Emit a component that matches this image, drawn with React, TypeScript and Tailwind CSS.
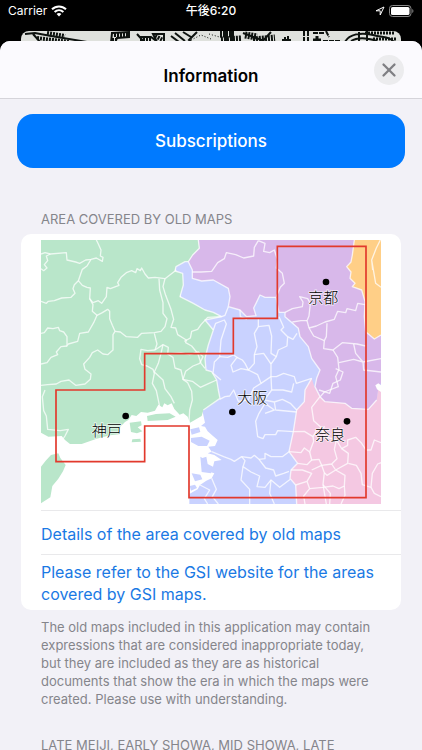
import {X} from "lucide-react";

const districts = [
    // west
    "M0 42 L12 38 L28 42 L76 38 L78 60 L104 66 L116 70 L134 60 L150 58 L166 54 L184 64 L186 52 L178 48 L180 30 L172 12 L166 0",
    "M28 42 L16 48 L20 62 L10 74 L18 84 L8 92 L0 86",
    "M150 58 L138 78 L124 88 L112 122 L100 134 L96 146 L102 160 L90 172 L62 174 L40 182 L22 184 L16 190 L0 184",
    "M112 122 L124 136 L138 142 L148 144 L146 176 L156 188 L172 182 L182 190 L196 170 L198 142 L208 146 L224 140 L234 136 L230 128 L240 112 L256 98 L272 92 L284 98 L288 86 L298 92 L302 84 L312 102 L322 114 L342 112 L372 116 L402 93",
    "M146 176 L156 194 L154 214 L168 226 L184 218 L200 208 L206 214 L206 236 L214 256 L222 274",
    "M168 226 L158 248 L142 276 L116 280 L110 304 L82 312 L78 318 L78 290 L68 276 L56 272 L52 262 L36 266 L20 264 L10 278 L0 280",
    "M78 318 L60 320 L46 336 L50 344 L30 352 L18 368 L0 372",
    "M222 274 L216 284 L216 330 L200 344 L186 342 L170 330 L154 338 L146 352 L128 372 L132 388 L150 402 L148 418 L132 432 L104 436 L84 420 L60 424 L46 432 L20 434 L0 436",
    "M222 274 L238 276 L256 290 L290 292 L302 280 L340 278 L360 274 L372 260 L378 236 L366 220 L366 188 L356 150 L354 116",
    "M342 330 L320 332 L300 328 L296 356 L302 374 L318 378 L336 388 L340 400 L334 430 L346 452 L356 500",
    "M12 450 L4 470 L8 512 L16 528 L20 568 L58 572 L82 568 L72 588 L64 600",
    "M372 116 L366 140 L374 166 L390 208 L398 238 L390 262 L404 264 L410 284 L436 300 L434 308 L452 318 L470 340 L480 370 L492 385",
    "M542 230 L500 232 L480 254 L470 268 L452 274 L448 294 L430 304",
    "M342 330 L348 312 L340 280",
    "M342 330 L366 314 L382 322 L380 342 L396 352 L402 384 L420 390 L426 418 L440 428 L452 454 L454 480 L446 510 L444 546",
    "M366 314 L360 340 L352 370 L340 396 L366 420 L372 446 L390 470 L400 490",
    "M382 342 L420 338 L446 344 L472 336 L486 350 L476 370 L456 378 L434 394 L426 418 L454 424 L478 442 L504 430 L527 420",
    // north
    "M454 96 L480 96 L512 94 L530 68 L550 56 L556 38 L584 44 L608 54 L638 48 L640 22 L652 2",
    "M652 2 L672 10 L668 34 L686 38 L700 30 L709 58 L706 84 L724 100 L730 130 L718 142 L706 170",
    "M732 217 L754 206 L784 200 L786 186 L776 170 L800 176 L808 190 L804 228 L798 242 L804 264",
    "M754 246 L780 242 L798 242 M804 264 L826 258 L852 246 L880 238 L890 214 L914 218 L918 206 L944 212 L950 190 L972 194",
    "M804 264 L818 288 L850 302 L856 290 L858 250",
    "M850 302 L848 326 L876 330 L904 308 L948 312 L974 318",
    "M876 330 L890 352 L894 388 L884 410 L892 440 L850 456 L838 470",
    "M894 368 L938 358 L966 366 L1020 356 M938 312 L944 340 L966 366 L968 390 L1020 396",
    "M995 90 L992 60 L1006 24 L1018 0 M992 60 L1004 130 L1020 142",
    // center
    "M562 200 L552 226 L542 230 M597 210 L598 230 L618 238",
    "M517 270 L524 250 L550 240 L556 252 L540 300 L536 350 L520 366 L516 400 L540 420",
    "M536 350 L560 352 L578 345 L588 352 L570 376 L576 396 L600 386 L622 390 L640 370 L640 344 L648 320 L640 280 L652 260 L652 236",
    "M588 352 L604 360 L612 370 L622 390 L650 404 L660 430 L638 444 L622 480 L592 484 L578 450 L566 468 L552 470 L536 478",
    "M714 230 L728 262 L720 270 L740 290 L756 298 L768 280 M740 290 L738 318 L712 330 L706 350 L690 372 L690 410 L706 410 L728 400 L760 410 L766 430 L812 415",
    "M652 260 L684 256 L692 288 L690 340 L706 350 M640 344 L668 340 L690 372",
    "M660 430 L690 410 L692 450 L670 480 L700 486 L724 478 L748 490 L767 510 M700 486 L704 510 L767 516",
    "M692 450 L726 450 L752 456 L758 430 M672 520 L700 510 L672 490 L654 520 L644 544 L650 590 L666 596 L672 584 L704 584 L710 572 L757 575",
    "M512 635 L548 650 L570 658 L580 664 L602 650 L630 654 L640 646 L654 658 L672 656 L672 640 L690 650 L724 650 L744 635",
    "M602 650 L612 662 L606 680 L630 696 L656 708 L648 740 L672 742 L690 720 L716 742 L748 718",
    "M654 658 L674 684 L698 690 L704 708 L728 700 L744 694 M606 680 L600 720 L626 748 L626 792 M690 720 L686 760 L700 792",
    "M512 715 L526 748 L514 770 L532 792 M477 735 L506 750 L490 776 L500 792",
    // south east
    "M837 470 L812 502 L818 542 L838 560 L852 590 L886 600 L902 626 L920 616 L920 600 L944 592 L962 610 L975 630 L990 630 L1000 600 L1020 608",
    "M757 575 L790 574 L816 590 L826 572 L852 560",
    "M744 635 L780 638 L790 624 L806 636 L818 604 L816 590",
    "M806 636 L812 660 L834 658 L842 676 L872 672 L888 656 L880 628 L886 600",
    "M770 670 L798 674 L812 660 M812 690 L842 676 L850 698 L846 734 L856 792",
    "M872 672 L884 690 L858 706 L850 698 M884 690 L920 670 L922 640 L902 626",
    "M750 690 L784 690 L812 700 L798 724 L806 746 L788 768 L792 792 M798 724 L764 735",
    "M806 746 L846 742 L876 738 L894 746 L910 738 L912 706 L884 690",
    "M910 738 L912 766 L900 792 M922 670 L946 676 L960 700 L964 734 L990 742 L1000 760 L1020 770",
    "M846 734 L868 760 L866 792 M990 742 L994 700 L1010 672 L1020 668",
    "M834 450 L866 460 L876 430 L898 420 L906 396 L884 386",
];

const cities = [
    {name: "京都", x: 802, y: 189, dotX: 855, dotY: 126},
    {name: "大阪", x: 589, y: 490, dotX: 574, dotY: 516},
    {name: "神戸", x: 152, y: 587, dotX: 254, dotY: 528},
    {name: "奈良", x: 822, y: 600, dotX: 918, dotY: 544},
];

function AreaMap() {
    return (
        <svg viewBox="0 0 1020 792" className="block w-full" role="img" aria-label="Area covered by old maps">
            <path fill="#c9d2ff" d="M400 60 H1020 V792 H445 V762 L470 748 L477 735 L496 722 L512 715 L520 700 L486 690 L482 655 L496 650 L500 672 L516 680 L520 664 L542 660 L520 645 L500 640 L512 635 L502 620 L522 618 L530 600 L516 588 L500 574 L492 560 L480 558 L492 548 L488 530 L470 440 Z"/>
            <path fill="#b9e6ca" d="M0 0 H472 L475 25 L455 45 L442 65 L432 65 L405 80 L402 93 L425 100 L427 135 L417 170 L457 190 L492 210 L517 217 L542 230 L492 240 L517 270 L502 315 L492 355 L495 390 L512 395 L527 420 L532 450 L537 475 L512 495 L487 510 L482 528 L447 548 L440 530 L427 520 L416 524 L400 507 L392 490 L380 496 L370 490 L364 502 L352 494 L342 512 L320 518 L300 516 L286 528 L272 525 L262 540 L252 546 L238 560 L235 583 L207 586 L167 596 L122 612 L87 612 L72 600 L62 588 L22 590 L0 578 Z"/>
            <path fill="#b9e6ca" d="M0 680 L14 662 L30 645 L52 640 L58 654 L74 675 L66 694 L52 716 L34 738 L28 772 L0 790 Z"/>
            <path fill="#b9e6ca" d="M266 548 L300 544 L302 556 L290 562 L304 574 L288 580 L270 576 Z M274 598 L298 596 L300 605 L272 607 Z M318 528 L345 522 L386 520 L404 530 L380 540 L320 543 Z"/>
            <path fill="#c9d2ff" d="M448 568 L474 562 L478 576 L452 584 Z M450 594 L482 590 L506 602 L498 618 L472 618 L450 606 Z M478 650 L488 656 L490 684 L512 690 L510 700 L482 696 Z M452 700 L478 704 L484 718 L462 724 Z M446 738 L462 734 L468 744 L450 752 Z"/>
            <path fill="#d8b8ea" d="M472 0 H1020 V430 L1012 445 L1007 480 L982 508 L932 505 L912 490 L852 485 L837 470 L822 440 L827 415 L837 390 L812 355 L802 320 L777 290 L772 265 L754 246 L732 230 L732 217 L714 217 L705 172 L687 170 L672 172 L657 165 L645 190 L638 204 L645 227 L617 230 L597 210 L562 200 L567 170 L562 145 L517 120 L482 123 L454 115 V90 L442 65 L455 45 L475 25 Z"/>
            <path fill="#ffcf87" d="M940 0 H1020 V285 L1010 290 L1000 297 L988 284 L974 275 L970 230 L972 185 L962 150 L934 140 L942 130 L927 115 L930 96 L917 80 L930 66 L934 45 Z"/>
            <path fill="#f4c8e2" d="M812 415 L820 440 L837 470 L852 485 L912 490 L932 505 L982 508 L1007 480 L1012 445 L1020 440 V792 H767 L764 735 L747 715 L750 690 L770 670 L744 635 L757 575 L767 510 L790 485 L792 450 Z"/>
            <path fill="#fff" d="M1003 436 L1012 430 L1020 436 V456 L1008 448 Z"/>
            <g fill="none" stroke="#fff" strokeWidth="4" strokeLinejoin="round" strokeOpacity="0.75">
                <path d="M472 0 L475 25 L455 45 L442 65 L454 90 V115 L482 123 L517 120 L562 145 L567 170 L562 200 L597 210 L617 230 L645 227 L638 204 L645 190 L657 165 L672 172 L705 172 L714 217 L732 217 V230 L772 265 L777 290 L802 320 L812 355 L837 390 L827 415 L822 440 L837 470 L852 485 L912 490 L932 505 L982 508 L1007 480"/>
                <path d="M442 65 L432 65 L405 80 L402 93 L425 100 L427 135 L417 170 L457 190 L492 210 L517 217 L542 230 L492 240 L517 270 L502 315 L492 355 L495 390 L512 395 L527 420 L532 450 L537 475 L487 510"/>
                <path d="M940 0 L934 45 L930 66 L917 80 L930 96 L927 115 L942 130 L934 140 L962 150 L972 185 L970 230 L974 275 L1000 297 L1020 285"/>
                <path d="M812 415 L792 450 L790 485 L767 510 L757 575 L744 635 L770 670 L750 690 L747 715 L764 735 L767 792"/>
                {districts.map((d) => <path key={d} d={d}/>)}
            </g>
            <path fill="none" stroke="#e2392c" strokeWidth="5" d="M709 19 H975 V773 H444 V558 H311 V665 H45 V450 H311 V341 H577 V235 H709 Z"/>
            {cities.map((city) => (
                <g key={city.name}>
                    <circle cx={city.dotX} cy={city.dotY} r="10"/>
                    <text x={city.x} y={city.y} fontSize="45" stroke="#fff" strokeWidth="5" strokeOpacity="0.7" paintOrder="stroke" className="font-['Noto_Sans_CJK_JP',sans-serif] font-light">
                        {city.name}
                    </text>
                </g>
            ))}
        </svg>
    )
}

function StatusBar() {
    return (
        <div className="grid grid-cols-3 items-center h-[22px] px-2 text-white text-xs">
            <div className="flex items-center gap-1">
                <span>Carrier</span>
                <svg viewBox="0 0 16 12" className="w-4 h-3" fill="none" stroke="currentColor" strokeWidth="2">
                    <path d="M1 4.3 C5 0.4 11 0.4 15 4.3 M3.6 7 C6.2 4.5 9.8 4.5 12.4 7"/>
                    <path d="M8 11.5 L5.6 9 C7 7.7 9 7.7 10.4 9 Z" fill="currentColor" stroke="none"/>
                </svg>
            </div>
            <div className="text-center font-medium">午後6:20</div>
            <div className="flex items-center justify-end gap-1">
                <svg viewBox="0 0 10 10" className="size-[10px]" fill="none" stroke="currentColor" strokeLinejoin="round">
                    <path d="M9 1 L1 4.8 H5.2 V9 Z"/>
                </svg>
                <svg viewBox="0 0 25 12" className="w-[25px] h-3">
                    <rect x="0.5" y="0.5" width="21.5" height="11" rx="3" fill="none" stroke="#8a8a8a"/>
                    <rect x="2" y="2" width="18.5" height="8" rx="1.6" fill="#fff"/>
                    <path d="M23.3 4 C24.8 4.6 24.8 7.4 23.3 8 Z" fill="#8a8a8a"/>
                </svg>
            </div>
        </div>
    )
}

function OldMapStrip() {
    return (
        <svg viewBox="0 0 380 20" preserveAspectRatio="none" className="block w-full h-5" aria-hidden="true">
            <rect width="380" height="20" rx="8" fill="#dfe1dd"/>
            <g fill="none" stroke="#0d120f">
                <path strokeWidth="2" d="M4 3 L14 2 L30 5 L66 11 M12 3 L20 12"/>
                <path strokeWidth="4" strokeDasharray="2 1" d="M16 7 L48 11 M26 2 L44 5"/>
                <path strokeWidth="2" d="M91 2 L108 1 V6 L96 7 L94 12 H90 Z M116 3 L124 12 M118 6 H130 L138 12 M132 3 H143 V11 H136 Z"/>
                <path strokeWidth="4" strokeDasharray="2 1" d="M93 4 H107 M91 9 H95 M119 9 H130 M134 5 L142 9"/>
                <path strokeWidth="2" d="M154 2 L164 10 M150 5 L158 11 M162 1 L170 6 M176 1 L168 9 L172 12"/>
                <path strokeWidth="1" strokeDasharray="1 2" d="M170 9 L180 4 L190 8 M188 3 L202 7"/>
                <path strokeWidth="7" strokeDasharray="2 1" d="M199 3 L214 3 M200 9 L220 8 M224 4 L236 6 M232 9 L254 7"/>
                <path strokeWidth="2" d="M205 0 V12 M211 0 V12 M222 2 L246 11 M250 1 L240 12 M264 6 V11 M267 5 V11 M261 9 H270"/>
                <path strokeWidth="2" strokeDasharray="5 1" d="M283 0 V12 M287 0 V12 M292 2 H304 M305 0 L308 6 M302 10 H320"/>
                <path strokeWidth="3" d="M292 9 H300 M296 5 V11"/>
                <path strokeWidth="2" d="M324 11 C328 3 340 1 352 4 S368 5 374 12 M330 10 C338 5 350 8 356 10 M338 1 V12 M346 0 V12"/>
                <path strokeWidth="3" strokeDasharray="2 1" d="M344 2 H374 M352 8 H376"/>
            </g>
        </svg>
    )
}

export default function App() {
    return (
        <div className="h-screen w-full flex flex-col overflow-hidden bg-black font-[Inter,'Noto_Sans_CJK_JP',sans-serif]">
            <StatusBar/>
            <div className="h-[19px] px-[21px] pt-[9px] overflow-hidden">
                <OldMapStrip/>
            </div>
            <main className="flex-1 min-h-0 flex flex-col rounded-t-[10px] overflow-hidden bg-[#f2f1f7]">
                <header className="grid grid-cols-[1fr_auto_1fr] shrink-0 h-[58px] px-[18px] border-b border-[#d5d4da] bg-[#fbfafe]">
                    <h1 className="col-start-2 self-center pt-3 text-[17px] leading-6 font-semibold">Information</h1>
                    <button type="button" aria-label="Close" className="justify-self-end self-center size-[30px] rounded-full flex items-center justify-center bg-[#ececee] text-[#7f7f83]">
                        <X size={22} strokeWidth={2.5}/>
                    </button>
                </header>
                <div className="flex-1 min-h-0 overflow-y-auto [scrollbar-width:none]">
                    <div className="px-[17px] pt-[15px]">
                        <button type="button" className="w-full h-[54px] pt-[2px] rounded-2xl bg-[#007aff] text-white text-[17px] font-medium">
                            Subscriptions
                        </button>
                    </div>
                    <section className="px-[21px] pt-[42px]">
                        <h2 className="px-5 text-[13px] leading-[18px] text-[#85858b]">AREA COVERED BY OLD MAPS</h2>
                        <div className="mt-[6px] pl-5 rounded-[10px] bg-white text-base leading-[22px] text-[#1a79e4]">
                            <div className="pt-[6px] pr-5 pb-[6px]">
                                <AreaMap/>
                            </div>
                            <a href="#details" className="flex items-center h-11 pt-[2px] border-t border-[#e9e9eb]">
                                Details of the area covered by old maps
                            </a>
                            <a href="#gsi" className="block border-t border-[#e9e9eb] pr-4 pt-[6px] pb-[5px]">
                                Please refer to the GSI website for the areas covered by GSI maps.
                            </a>
                        </div>
                        <p className="px-5 pt-2 text-[13px] leading-[18px] text-[#85858b]">
                            The old maps included in this application may contain expressions that are considered
                            inappropriate today, but they are included as they are as historical documents that show
                            the era in which the maps were created. Please use with understanding.
                        </p>
                    </section>
                    <section className="px-[21px] pt-[28px] pb-10">
                        <h2 className="px-5 text-[13px] leading-[18px] text-[#85858b]">LATE MEIJI, EARLY SHOWA, MID SHOWA, LATE</h2>
                    </section>
                </div>
            </main>
        </div>
    )
}
